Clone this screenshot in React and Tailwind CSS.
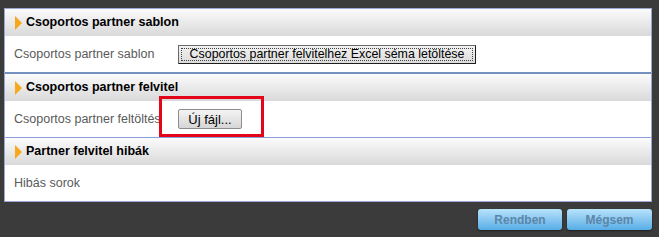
import React from "react";

// Szekció fejléc (narancs háromszög + félkövér cím)
const SectionHeader = ({ title }) => (
  <div className="h-[27px] flex items-center bg-gradient-to-b from-[#fbfbfb] to-[#d9d9d9] pl-[10px]">
    <svg width="7" height="14" viewBox="0 0 7 14" className="mr-[4px]">
      <path d="M0 0 L7 7 L0 14 Z" fill="#f5a81c" />
    </svg>
    <span className="text-[12.5px] font-bold text-black">{title}</span>
  </div>
);

const Row = ({ label, children }) => (
  <div className="h-[36px] flex items-center bg-white relative">
    <span className="w-[173px] pl-[9px] text-[12.5px] text-[#5a5a5a] whitespace-nowrap overflow-hidden">
      {label}
    </span>
    {children}
  </div>
);

export default function App() {
  return (
    <div
      className="w-[659px] h-[237px] bg-[#3b3b3b] pt-[8px] relative"
      style={{ fontFamily: '"Liberation Sans", Arial, sans-serif' }}
    >
      <div className="ml-[4px] w-[648px] border border-[#9aa6d6] bg-white">
        <SectionHeader title="Csoportos partner sablon" />
        <Row label="Csoportos partner sablon">
          <button className="h-[19px] w-[298px] border border-[#6b6b6b] border-r-[#1e1e1e] border-b-[#1e1e1e] bg-gradient-to-b from-[#f2f2f2] to-[#dcdcdc] p-[2px] flex">
            <span className="flex-1 border border-dotted border-[#444] flex items-center justify-center text-[12.4px] leading-none text-black whitespace-nowrap">
              Csoportos partner felvitelhez Excel séma letöltése
            </span>
          </button>
        </Row>
        <div className="h-[2px] bg-[#7390bf]" />
        <SectionHeader title="Csoportos partner felvitel" />
        <Row label="Csoportos partner feltöltés">
          <button className="h-[20px] w-[64px] border border-[#8c8c8c] rounded-[2px] bg-gradient-to-b from-[#f4f4f4] to-[#d6d6d6] text-[13px] leading-none text-black">
            Új fájl...
          </button>
        </Row>
        <div className="h-px bg-[#8ea0da]" />
        <SectionHeader title="Partner felvitel hibák" />
        <Row label="Hibás sorok" />
      </div>

      <div className="flex justify-end gap-[5px] mt-[7px] w-[652px]">
        <button className="h-[21px] w-[84px] rounded-[3px] bg-gradient-to-b from-[#b8e2fb] to-[#55ade6] shadow-[0_1px_2px_rgba(0,0,0,0.5)] text-[12px] font-bold text-[#5c86a8]">
          Rendben
        </button>
        <button className="h-[21px] w-[85px] rounded-[3px] bg-gradient-to-b from-[#b8e2fb] to-[#55ade6] shadow-[0_1px_2px_rgba(0,0,0,0.5)] text-[12px] font-bold text-[#5c86a8]">
          Mégsem
        </button>
      </div>

      {/* piros kiemelő keret */}
      <div className="absolute left-[159px] top-[96px] w-[105px] h-[41px] border-[3px] border-[#e3061a]" />
    </div>
  );
}
